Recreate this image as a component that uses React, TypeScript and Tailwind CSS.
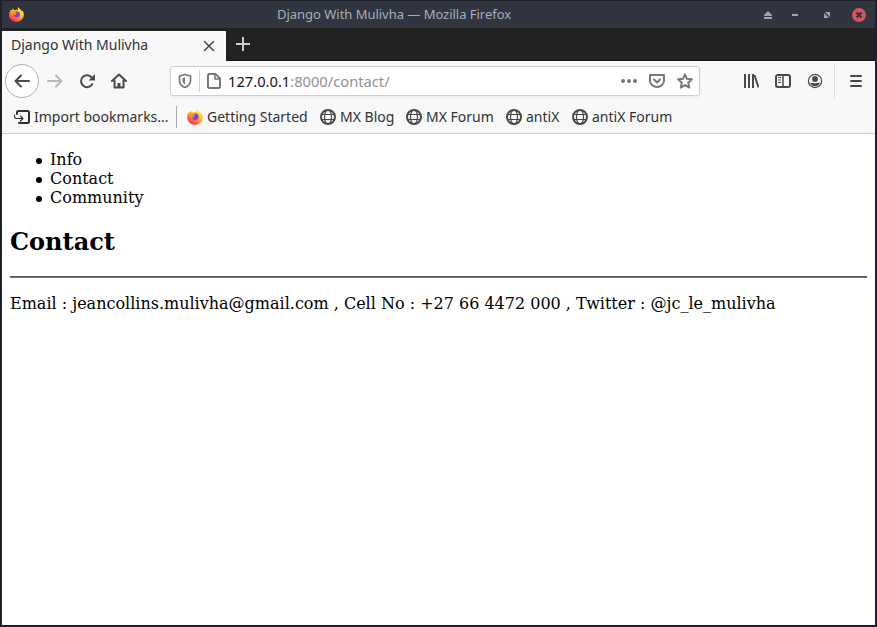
import React from "react";

const ui = "font-['Noto_Sans',sans-serif]";

function Firefox({ size, id }: { size: number; id: string }) {
  return (
    <svg width={size} height={size} viewBox="0 0 16 16" className="shrink-0">
      <defs>
        <linearGradient id={id} x1="0.8" y1="0.05" x2="0.25" y2="0.95">
          <stop offset="0" stopColor="#fff04a" />
          <stop offset="0.4" stopColor="#ffc02e" />
          <stop offset="0.68" stopColor="#ff7a2e" />
          <stop offset="1" stopColor="#f5246b" />
        </linearGradient>
      </defs>
      <path
        fill={`url(#${id})`}
        d="M9.7.1c-.7 1.3-.4 2.200.2 3C8.700 2.600 7 2.800 5.800 3.500 4.900 3.300 4.600 2.300 4.500 1.600 3.700 2.100 3.300 2.900 3.100 3.600L1.800 2.900C1.200 4.200.1 6.200.1 8.400A7.900 7.600 0 0 0 15.900 8.200C15.900 6.300 15.100 4.700 14 3.700l.2 1.500C13.100 2.700 10.700 2.300 9.700.1z"
      />
      <circle cx="8.300" cy="7.800" r="3.300" fill="#7547d7" />
      <path fill="#ff8a2a" d="M3.100 4.400C4.700 3.800 6 4.400 6.900 5.300l1.800.2C8.400 6.600 7.200 6.600 6.800 7.200c-.2.500.3.900.9 1.100-.8.700-2.200.3-3.100-.4C4.300 7 4.300 5.700 3.100 4.400z" />
    </svg>
  );
}

function Icon({ children, color = "#4a4a4a", width = 2 }: { children: React.ReactNode; color?: string; width?: number }) {
  return (
    <svg width="16" height="16" viewBox="0 0 16 16" fill="none" stroke={color} strokeWidth={width} strokeLinecap="round" strokeLinejoin="round" className="shrink-0">
      {children}
    </svg>
  );
}

function Globe() {
  return (
    <Icon width={1.2}>
      <circle cx="8" cy="8" r="7" strokeWidth="2" />
      <ellipse cx="8" cy="8" rx="3.500" ry="7" />
      <path d="M1.500 5.500h13M1.500 10.500h13" />
    </Icon>
  );
}

function TitleBar() {
  return (
    <header className={`flex h-7 shrink-0 items-center border-t border-[#1f232e] bg-[#303540] pl-[7px] text-[13px] text-[#a6afbf] ${ui}`}>
      <Firefox size={15} id="fx-title" />
      <div className="mb-0.5 ml-[253px] w-[474px] shrink-0 whitespace-nowrap leading-[18px] tracking-[-0.025px]">Django With Mulivha — Mozilla Firefox</div>
      <svg width="115" height="16" viewBox="0 0 115 16" className="shrink-0" fill="#a0a7b4">
        <path d="M13 8l4-4 4 4v1h-8zM13 10h8v2h-8zM41 7h6v2h-6zM74 5h5v5zM73 6l5 5h-5z" />
        <circle cx="108" cy="8" r="7" fill="#d2545c" />
        <path d="M105.500 5.500l5 5M110.500 5.500l-5 5" stroke="#303540" strokeWidth="2" />
      </svg>
    </header>
  );
}

function Tabs() {
  return (
    <div className="flex h-[33px] shrink-0 bg-[#222]">
      <div className={`mt-[3px] flex w-56 items-center bg-[#f8f8f8] pl-[9px] text-[14px] text-[#303236] ${ui}`}>
        <span className="mb-0.5 w-[190px] whitespace-nowrap leading-5">Django With Mulivha</span>
        <Icon width={1.6}><path d="M3.500 3.500l9 9M12.500 3.500l-9 9" /></Icon>
      </div>
      <div className="flex-1 border-b border-[#151515] pl-[9px] pt-2">
        <Icon color="#cfcccd"><path strokeLinecap="butt" d="M8 1v14M1 8h14" /></Icon>
      </div>
    </div>
  );
}

function NavBar() {
  return (
    <nav className="flex h-10 shrink-0 items-center pl-[3px]">
      <button className="flex size-[34px] shrink-0 items-center justify-center rounded-full border border-[#b1b1b1] bg-white">
        <Icon><path d="M15 8H1.500M7 2.500L1.500 8 7 13.500" /></Icon>
      </button>
      <div className="ml-2 flex gap-4">
        <Icon color="#b8b8b8"><path d="M1 8h13.500M9 2.500L14.500 8 9 13.500" /></Icon>
        <Icon><path d="M13.200 11.200A6 6 0 1 1 13 4.800" /><path d="M16 1v6.500H9.500z" fill="#4a4a4a" stroke="none" /></Icon>
        <Icon><path d="M1 8l7-6.500L15 8M3.500 7.500V14.500h9V7.500" /><path d="M8 14v-4" strokeWidth="3" strokeLinecap="butt" /></Icon>
      </div>
      <div className="ml-[43px] flex h-[30px] w-[530px] shrink-0 items-center rounded-[3px] border border-[#cfcfcf] bg-white pl-1.5 shadow-[0_1px_3px_rgba(0,0,0,0.06)]">
        <Icon color="#777" width={1.700}>
          <path d="M8 1.500L13.500 3v4.500c0 3.500-2.200 5.700-5.500 7-3.300-1.300-5.500-3.500-5.500-7V3z" />
          <path d="M8 4.500v7C6.300 10.300 5.500 9 5.500 7.500v-2.300z" fill="#777" stroke="none" />
        </Icon>
        <div className="ml-1.5 h-[22px] w-px bg-[#d2d2d2]" />
        <div className="ml-1.5 flex">
          <Icon color="#777"><path d="M3.500 1h6L14 5.500V13.500q0 1.500-1.500 1.500h-9Q2 15 2 13.500V2.500Q2 1 3.500 1z" /><path d="M9 1v5h5" strokeWidth="1.500" /></Icon>
        </div>
        <div className={`ml-1.5 w-[393px] whitespace-nowrap text-[14.700px] leading-5 text-[#929292] ${ui}`}><span className="text-[#15141a]">127.0.0.1</span>:8000/contact/</div>
        <div className="flex gap-3">
          <Icon color="#777"><g fill="#777" stroke="none"><circle cx="2" cy="8" r="2" /><circle cx="8" cy="8" r="2" /><circle cx="14" cy="8" r="2" /></g></Icon>
          <Icon color="#777"><path d="M1 2h14v5.500a7 6.500 0 0 1-14 0z" /><path d="M5 6.500l3 3 3-3" /></Icon>
          <Icon color="#777" width={2}><path d="M8 1.300l2 4.500 4.800.5-3.600 3.400 1 4.900L8 12.200l-4.200 2.400 1-4.900L1.200 6.300l4.800-.5z" /></Icon>
        </div>
      </div>
      <div className="ml-[43px] flex gap-4">
        <Icon><path strokeLinecap="butt" d="M2 1v14M6 1v14M10 1v14M11.500 2l4 12.500" /></Icon>
        <Icon><rect x="1" y="2" width="14" height="12" rx="2" /><path d="M8 2v12" strokeWidth="1.500" /><path d="M3 4.500H6M3 7H6M3 9.500H6" strokeWidth="1" strokeLinecap="butt" /></Icon>
        <Icon width={1.200}><circle cx="8" cy="8" r="6.600" /><circle cx="8" cy="6" r="3" fill="#4a4a4a" stroke="none" /><path d="M3 9.800Q8 10.500 13 9.800 11.500 13.300 8 13.300T3 9.800" fill="#4a4a4a" stroke="none" /></Icon>
      </div>
      <div className="ml-[11px] h-[34px] w-px bg-[#dcdcdc]" />
      <div className="ml-[13px]"><Icon><path d="M3 3h10M3 8h10M3 13h10" /></Icon></div>
    </nav>
  );
}

function Bookmark({ icon, label, width }: { icon: React.ReactNode; label: string; width: string }) {
  return (
    <div className={`flex shrink-0 items-center gap-1 whitespace-nowrap ${width}`}>
      {icon}
      <span>{label}</span>
    </div>
  );
}

function Bookmarks() {
  return (
    <div className={`flex h-[33px] shrink-0 items-center border-b border-[#cfcfcf] pl-3 text-[14px] leading-5 text-[#303236] ${ui}`}>
      <Bookmark
        width="w-[162px]"
        label="Import bookmarks..."
        icon={<Icon color="#303030"><path d="M3 5V3.500Q3 2 4.500 2h9Q15 2 15 3.500v9q0 1.500-1.500 1.500H5" /><path d="M.6 6v2Q.6 9.500 2.500 9.500H9M6.500 7L9 9.500 6.500 12" strokeWidth="1.200" /></Icon>}
      />
      <div className="mr-2.5 h-[22px] w-px bg-[#aaa]" />
      <Bookmark width="w-[133px]" label="Getting Started" icon={<Firefox size={16} id="fx-bookmark" />} />
      <Bookmark width="w-[86px]" label="MX Blog" icon={<Globe />} />
      <Bookmark width="w-[100px]" label="MX Forum" icon={<Globe />} />
      <Bookmark width="w-[66px]" label="antiX" icon={<Globe />} />
      <Bookmark width="w-[110px]" label="antiX Forum" icon={<Globe />} />
    </div>
  );
}

function ListItem({ label }: { label: string }) {
  return (
    <li className="flex items-center gap-2">
      <span className="mt-0.5 size-1.5 rounded-full bg-black" />
      {label}
    </li>
  );
}

export default function App() {
  return (
    <div className="flex h-[627px] w-[877px] flex-col overflow-hidden border-x-2 border-b-2 border-[#1d1f2a] bg-[#f8f8f8]">
      <TitleBar />
      <Tabs />
      <NavBar />
      <Bookmarks />
      <main className="flex-1 bg-white px-2 pt-4 font-['DejaVu_Serif',serif] text-[16px] leading-[19px] text-black">
        <ul className="pl-[26px]">
          <ListItem label="Info" />
          <ListItem label="Contact" />
          <ListItem label="Community" />
        </ul>
        <h2 className="mt-[21px] text-[24px] font-bold leading-7">Contact</h2>
        <hr className="mt-5 h-0.5 border-b border-t border-b-[#777] border-t-[#555]" />
        <p className="mt-4 whitespace-nowrap">Email : jeancollins.mulivha@gmail.com , Cell No : +27 66 4472 000 , Twitter : @jc_le_mulivha</p>
      </main>
    </div>
  );
}
